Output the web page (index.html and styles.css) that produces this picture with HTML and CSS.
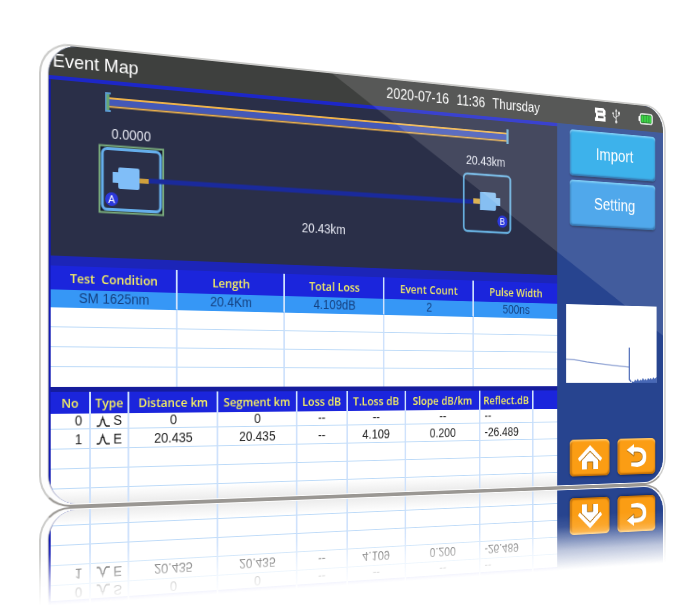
FILE: index.html
```html
<!DOCTYPE html>
<html lang="en">
<head>
<meta charset="utf-8">
<title>Event Map</title>
<link rel="stylesheet" href="styles.css">
</head>
<body>
<main class="stage">
  <div class="device">
    <div class="screen">
      <header class="topbar">
        <h1 class="title">Event Map</h1>
        <div class="clock"><span>2020-07-16</span><span>11:36</span><span>Thursday</span></div>
        <div class="status">
          <svg class="status-sd" viewBox="0 0 16 18" aria-hidden="true">
            <path d="M0 1H13L16 4V9L14 10L16 11V17H0V13L2 12V8L0 7Z" fill="#fff"/>
            <path d="M4 5.500H12" stroke="#666" stroke-width="2"/>
            <path d="M5 12H13" stroke="#444" stroke-width="2.500"/>
          </svg>
          <svg class="status-usb" viewBox="0 0 12 18" aria-hidden="true">
            <path d="M6 2V15M6 12L1.500 9V6M6 10L10.500 7.500V5" fill="none" stroke="#ddd" stroke-width="1.200"/>
            <path d="M6 0L8 3.500H4Z" fill="#ddd"/>
            <circle cx="6" cy="16" r="1.800" fill="#ddd"/>
            <circle cx="1.500" cy="6" r="1.400" fill="#ddd"/>
            <rect x="9" y="3.500" width="3" height="3" fill="#ddd"/>
          </svg>
          <svg class="status-battery" viewBox="0 0 22 16" aria-hidden="true">
            <rect x="2.500" y="2" width="18.500" height="12" rx="2.500" fill="#12701a" stroke="#fff" stroke-width="1.600"/>
            <rect x="0" y="5" width="2.500" height="6" rx="1" fill="#fff"/>
            <path d="M6 4V12M10 4V12M14 4V12M18 4V12" stroke="#1fd42b" stroke-width="3"/>
          </svg>
        </div>
      </header>

      <div class="body">
        <section class="main">
          <svg class="map" viewBox="0 0 618 177" role="img" aria-label="Fiber link map">
            <path d="M61 14H546M61 22.500H546" stroke="#edb24a" stroke-width="1.800"/>
            <rect x="61" y="15" width="485" height="6.500" fill="#4458b8"/>
            <path d="M63 9H58V27H63" fill="none" stroke="#5a9bd0" stroke-width="2"/>
            <path d="M60 10V26" stroke="#67a874" stroke-width="3"/>
            <path d="M547 9V26" stroke="#6fb3d8" stroke-width="3"/>

            <text class="map-label" x="85" y="55">0.0000</text>
            <rect x="51" y="62.500" width="69" height="68" fill="#151a2c" stroke="#79ab7c" stroke-width="2"/>
            <rect x="54" y="65.500" width="63" height="62" rx="5" fill="#2a2f48" stroke="#65aeeb" stroke-width="3"/>
            <path d="M104 96H503" stroke="#1a2a9c" stroke-width="5"/>
            <path d="M65 89H71V86Q71 84 73 84H92Q94 84 94 86V104Q94 106 92 106H73Q71 106 71 104V100H65Z" fill="#80bef8"/>
            <rect x="94" y="94" width="10" height="5" fill="#d0a03c"/>
            <circle cx="64" cy="117" r="7" fill="#2b38dc"/>
            <text class="map-badge" x="64" y="121">A</text>

            <text class="map-label" x="517" y="53">20.43km</text>
            <rect x="487" y="64" width="64" height="66" rx="5" fill="none" stroke="#66addc" stroke-width="2.500"/>
            <rect x="500" y="92" width="9" height="6" fill="#dcb254"/>
            <path d="M509 84H529Q531 84 531 86V90H537V99H531V103Q531 105 529 105H509Z" fill="#86bff2"/>
            <circle cx="540" cy="117" r="7" fill="#2b38dc"/>
            <text class="map-badge" x="540" y="121">B</text>

            <text class="map-label" x="307" y="141">20.43km</text>
          </svg>

          <table class="grid summary">
            <colgroup><col class="s1"><col class="s2"><col class="s3"><col class="s4"><col class="s5"></colgroup>
            <thead><tr><th>Test&nbsp; Condition</th><th>Length</th><th>Total Loss</th><th>Event Count</th><th>Pulse Width</th></tr></thead>
            <tbody>
              <tr class="selected"><td>SM 1625nm</td><td>20.4Km</td><td>4.109dB</td><td>2</td><td>500ns</td></tr>
              <tr><td></td><td></td><td></td><td></td><td></td></tr>
              <tr><td></td><td></td><td></td><td></td><td></td></tr>
              <tr><td></td><td></td><td></td><td></td><td></td></tr>
              <tr><td></td><td></td><td></td><td></td><td></td></tr>
            </tbody>
          </table>

          <table class="grid events">
            <colgroup><col class="e1"><col class="e2"><col class="e3"><col class="e4"><col class="e5"><col class="e6"><col class="e7"><col class="e8"><col class="e9"></colgroup>
            <thead><tr><th>No</th><th>Type</th><th>Distance km</th><th>Segment km</th><th>Loss dB</th><th>T.Loss dB</th><th>Slope dB/km</th><th>Reflect.dB</th><th></th></tr></thead>
            <tbody>
              <tr class="first"><td class="no">0</td><td><span class="type"><svg class="peak" viewBox="0 0 14 12" aria-hidden="true"><path d="M0 11H2.500Q4.500 10 5.500 4M7.500 4Q8.500 10 10.500 11H14" fill="none" stroke="#222" stroke-width="1.500"/><path d="M5 5L6.500 0L8 5Z" fill="#222"/></svg>S</span></td><td>0</td><td>0</td><td>--</td><td>--</td><td>--</td><td class="reflect">--</td><td></td></tr>
              <tr><td class="no">1</td><td><span class="type"><svg class="peak" viewBox="0 0 14 12" aria-hidden="true"><path d="M0 11H2.500Q4.500 10 5.500 4M7.500 4Q8.500 10 10.500 11H14" fill="none" stroke="#222" stroke-width="1.500"/><path d="M5 5L6.500 0L8 5Z" fill="#222"/></svg>E</span></td><td>20.435</td><td>20.435</td><td>--</td><td>4.109</td><td>0.200</td><td class="reflect">-26.489</td><td></td></tr>
              <tr><td></td><td></td><td></td><td></td><td></td><td></td><td></td><td></td><td></td></tr>
              <tr><td></td><td></td><td></td><td></td><td></td><td></td><td></td><td></td><td></td></tr>
              <tr class="last"><td></td><td></td><td></td><td></td><td></td><td></td><td></td><td></td><td></td></tr>
            </tbody>
          </table>
        </section>

        <aside class="side">
          <div class="actions">
            <button class="action import" type="button">Import</button>
            <button class="action setting" type="button">Setting</button>
          </div>
          <svg class="trace" viewBox="0 0 136 95" role="img" aria-label="Trace preview">
            <rect width="136" height="95" fill="#fff"/>
            <path d="M0 66L12 66.500L30 69L50 71L70 73L94 75" fill="none" stroke="#7f95cd" stroke-width="1.300"/>
            <path d="M94 51V90L97 93" fill="none" stroke="#4f6cb8" stroke-width="2"/>
            <path d="M97 95L99 92L101 93L103 90L105 92L107 89L109 92L111 90L113 91L115 88L117 91L119 89L121 91L123 88L125 90L127 88L129 90L131 87L133 89L136 87V95Z" fill="#4868b6"/>
          </svg>
          <nav class="nav">
            <button class="key" type="button" aria-label="Home">
              <svg viewBox="0 0 36 30" aria-hidden="true"><g fill="#fff"><path d="M18 8L30 18V29H22V20H14V29H6V18Z"/><path d="M18 0L36 16L33 19.500L18 6.500L3 19.500L0 16Z"/></g><path d="M4 19.500L18 7.500L32 19.500M14 29V20H22V29" fill="none" stroke="#7a5210" stroke-width=".8"/></svg>
            </button>
            <button class="key" type="button" aria-label="Back">
              <svg viewBox="0 0 36 30" aria-hidden="true"><path d="M3 7L14 0V4H20Q33 5 33 15.500Q33 27 19 28L10 27V22H19Q27 21 27 15.500Q27 10 19 9.500H14V14Z" fill="#fff"/><path d="M3 7.500L14 14.500V10H19Q27 10 27 15.500Q27 21 19 22H10" fill="none" stroke="#7a5210" stroke-width=".8"/></svg>
            </button>
          </nav>
        </aside>
      </div>
      <div class="glare"></div>
    </div>
  </div>
</main>
</body>
</html>
```
FILE: styles.css
```css
* { box-sizing: border-box; }

body {
  margin: 0;
  background: #fff;
  font-family: "Liberation Sans", Arial, sans-serif;
}

.stage {
  min-height: 100vh;
  padding: 41px 0 98px 39px;
  overflow: hidden;
}

/* The tablet stands at an angle, its right side further away. */
.device {
  width: 120%;
  padding: 0 2px 1px 7px;
  border: 2px solid #cbcbc9;
  border-bottom-color: #9a9793;
  border-radius: 32px;
  background: #fdfdfd;
  transform-origin: 0 73%;
  transform: perspective(99vw) rotateY(12deg);
  -webkit-box-reflect: below 0 linear-gradient(transparent 79%, rgba(0, 0, 0, .3) 84%, rgba(0, 0, 0, .9) 90%, #000 93%);
}

.screen {
  position: relative;
  overflow: hidden;
  border-left: 1px solid #a9a9b4;
  border-radius: 30px;
  background: #27448f;
}

.topbar {
  display: grid;
  grid-template-columns: 388fr 288fr 104fr;
  align-items: center;
  height: 31px;
  background: #3e403e;
  color: #fff;
}

.title {
  margin: 0;
  padding-left: 4px;
  font-size: 19px;
  line-height: 28px;
  font-weight: 400;
}

.clock {
  display: flex;
  gap: 10px;
  font-size: 16px;
}

.status {
  display: flex;
  align-items: center;
  gap: 10px;
}

.status-sd { width: 16px; height: 18px; }
.status-usb { width: 12px; height: 18px; }
.status-battery { width: 22px; height: 16px; margin-left: 18px; }

.body {
  display: grid;
  grid-template-columns: 621fr 159fr;
}

.main {
  padding-left: 2px;
  border-top: 4px solid #1d27c8;
  background: #1118b4;
}

.map {
  display: block;
  width: 100%;
  background: #2a2f48;
}

.map-label {
  font-size: 14px;
  text-anchor: middle;
  fill: #e4e6f0;
}

.map-badge {
  font-size: 11px;
  text-anchor: middle;
  fill: #fff;
}

.grid {
  width: 100%;
  table-layout: fixed;
  border-collapse: separate;
  border-spacing: 0;
  background: #fff;
}

.grid th,
.grid td {
  padding: 0;
  overflow: hidden;
  text-align: center;
  white-space: nowrap;
  border-right: 2px solid #cfe2fc;
}

.grid th:last-child,
.grid td:last-child { border-right: 0; }

.grid th {
  background: #1b25dc;
  color: #f4ee62;
  font-family: "Open Sans", "Noto Sans", sans-serif;
  font-size: 13px;
  font-weight: 600;
}

.grid td { border-bottom: 1px solid #bcdaf8; }

.summary { border-top: 10px solid #1c25b8; }
.summary th { height: 24px; line-height: 24px; }
.summary td { height: 20px; font-size: 14px; line-height: 17px; }
.summary .selected td {
  height: 18px;
  background: #3697f6;
  border-bottom-color: #3697f6;
  color: #15407f;
}
.summary tr:last-child td { border-bottom: 0; }

.s1 { width: 22%; }
.s2 { width: 20%; }
.s3 { width: 20%; }
.s4 { width: 19%; }
.s5 { width: 19%; }

.events { border-top: 5px solid #151c9c; }
.events th { height: 22px; line-height: 22px; }
.events td {
  height: 20px;
  color: #222;
  font-size: 14px;
  line-height: 16px;
}
.events .first td { height: 16px; line-height: 15px; }
.events .last td {
  height: 15px;
  border-bottom: 0;
  background: linear-gradient(#fff, #ececec);
}
.events .no { padding-left: 18px; }
.events .reflect { padding-left: 6px; text-align: left; }

.e1 { width: 42px; }
.e2 { width: 41px; }
.e3 { width: 16%; }
.e4 { width: 15%; }
.e5 { width: 10%; }
.e6 { width: 12%; }
.e7 { width: 16%; }
.e8 { width: 12%; }

.type {
  display: flex;
  align-items: center;
  justify-content: center;
  gap: 4px;
}

.peak { width: 14px; height: 12px; }

.side {
  display: flex;
  flex-direction: column;
  justify-content: space-between;
  padding: 6px 0 10px;
  background: #27448f;
}

.actions {
  display: grid;
  gap: 5px;
  padding: 0 12px 0 18px;
}

.action {
  height: 55px;
  padding: 0 0 0 4px;
  border: 0;
  border-radius: 5px;
  color: #fff;
  font-family: inherit;
  font-size: 20px;
  box-shadow: inset 0 2px 2px #6ec8f5, inset 2px 0 2px #1f6fb4, inset -1px -2px 2px #1a5fa0, 0 2px 2px #1b3064;
}

.import { background: #21a7e8; }
.setting { background: #379ce8; }

.trace {
  display: block;
  margin: 26px 10px 0 13px;
}

.nav {
  display: grid;
  grid-template-columns: 1fr 1fr;
  gap: 12px;
  padding: 0 12px 0 18px;
}

.key {
  display: grid;
  place-items: center;
  height: 44px;
  padding: 0;
  border: 0;
  border-radius: 6px;
  background: #fb9d14;
  box-shadow: inset 0 2px 2px #ffc766, inset 3px 0 2px #c9760c, inset -1px -2px 2px #bb6b06, 0 1px 3px #14275c;
}

.key svg { width: 36px; height: 30px; }

.glare {
  position: absolute;
  inset: 0;
  background: rgba(255, 255, 255, .13);
  clip-path: polygon(41% 0, 100% 0, 100% 61%);
  pointer-events: none;
}
```
